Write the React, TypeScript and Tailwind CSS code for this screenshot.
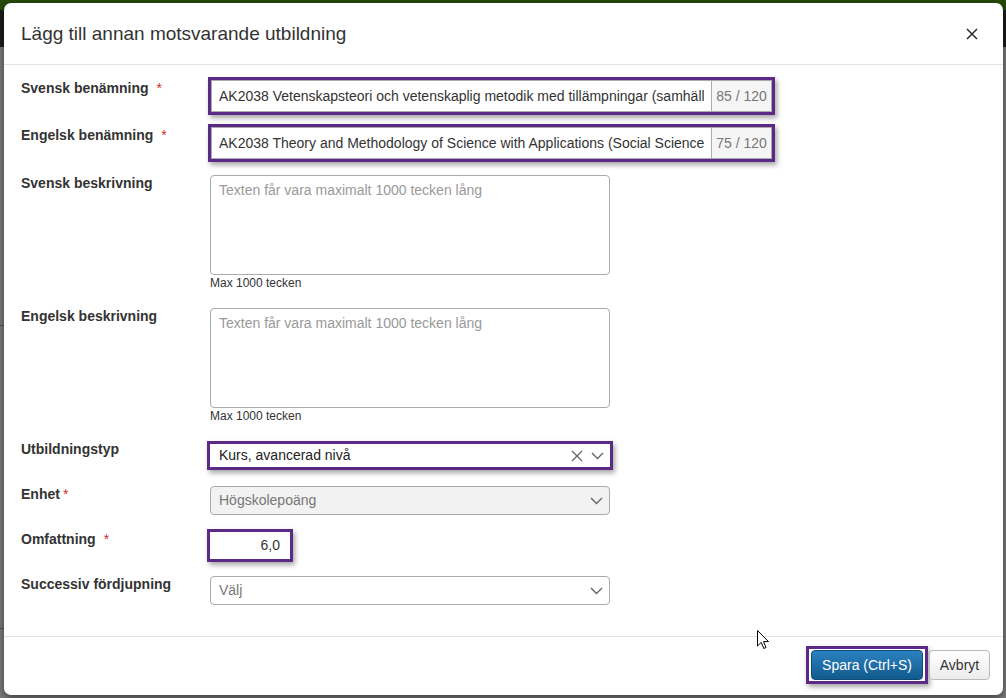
import React from "react";

const purple = "border-[3px] border-[#5b2a86] shadow-[2px_3px_5px_rgba(0,0,0,0.35)]";

function Chevron() {
  return (
    <svg width="13" height="8" viewBox="0 0 13 8" fill="none">
      <polyline points="1,1 6.5,6.5 12,1" stroke="#666" strokeWidth="1.4" />
    </svg>
  );
}

function Label({ text, star, gap = "ml-[8px]", className = "" }: { text: string; star?: boolean; gap?: string; className?: string }) {
  return (
    <div className={`w-[189px] shrink-0 text-[14px] font-bold leading-[16px] text-[#333] ${className}`}>
      {text}
      {star && <span className={`${gap} font-normal text-[#c9302c]`}>*</span>}
    </div>
  );
}

function CounterInput({ value, count }: { value: string; count: string }) {
  return (
    <div className={`-ml-[2px] flex h-[38px] w-[567px] bg-white ${purple}`}>
      <div className="flex min-w-0 flex-1 items-center border border-r-0 border-[#aaa] pl-[7px] text-[14px] text-[#333]">
        <span className="mr-[7px] block overflow-hidden whitespace-nowrap">{value}</span>
      </div>
      <div className="flex w-[61px] shrink-0 items-center justify-center border border-[#aaa] bg-[#f5f5f5] text-[14px] text-[#777]">
        {count}
      </div>
    </div>
  );
}

function TextBox() {
  return (
    <div className="flex flex-col">
      <textarea
        className="h-[100px] w-[400px] resize-none rounded-[4px] border border-[#aaa] bg-white px-[8px] pt-[5px] text-[14px] leading-[18px] text-[#333] placeholder:text-[#999] outline-none"
        placeholder="Texten får vara maximalt 1000 tecken lång"
      />
      <div className="mt-[1px] text-[12px] leading-[14px] text-[#333]">Max 1000 tecken</div>
    </div>
  );
}

function Select({ value, disabled }: { value: string; disabled?: boolean }) {
  return (
    <div
      className={`flex h-[29px] w-[400px] items-center justify-between rounded-[4px] border border-[#aaa] pl-[8px] pr-[6px] text-[14px] text-[#777] ${
        disabled ? "bg-[#f2f2f2]" : "bg-white"
      }`}
    >
      <span>{value}</span>
      <Chevron />
    </div>
  );
}

export default function App() {
  return (
    <div className="relative h-[698px] w-[1006px] overflow-hidden bg-[#7b7b7b] font-['Liberation_Sans',Arial,sans-serif]">
      <div className="h-[10px] bg-[#244a0b]" />
      <div className="h-[37px] bg-[#1c1c1c]" />
      <div className="mt-[278px] h-px w-[4px] bg-[#555]" />
      <div className="mt-[302px] h-px w-[4px] bg-[#555]" />

      <div className="absolute left-[4px] top-[3px] w-[999px] rounded-[7px] bg-white shadow-[0_3px_9px_rgba(0,0,0,0.5)]">
        <div className="flex h-[62px] items-center justify-between border-b border-[#e5e5e5] pl-[17px] pr-[25px]">
          <h1 className="text-[19px] leading-[22px] text-[#333]">Lägg till annan motsvarande utbildning</h1>
          <svg width="12" height="12" viewBox="0 0 12 12">
            <path d="M1 1 L11 11 M11 1 L1 11" stroke="#333" strokeWidth="1.6" />
          </svg>
        </div>

        <div className="flex flex-col pb-[31px] pl-[17px] pt-[12px]">
          <div className="flex">
            <Label text="Svensk benämning" star className="mt-[3px]" />
            <CounterInput
              value="AK2038 Vetenskapsteori och vetenskaplig metodik med tillämpningar (samhällsvetenskap)"
              count="85 / 120"
            />
          </div>
          <div className="mt-[9px] flex">
            <Label text="Engelsk benämning" star className="mt-[3px]" />
            <CounterInput
              value="AK2038 Theory and Methodology of Science with Applications (Social Sciences)"
              count="75 / 120"
            />
          </div>
          <div className="mt-[13px] flex">
            <Label text="Svensk beskrivning" />
            <TextBox />
          </div>
          <div className="mt-[18px] flex">
            <Label text="Engelsk beskrivning" />
            <TextBox />
          </div>
          <div className="mt-[18px] flex">
            <Label text="Utbildningstyp" />
            <div className={`-ml-[3px] flex h-[29px] w-[406px] items-center justify-between bg-white pl-[9px] pr-[6px] text-[14px] text-[#222] ${purple}`}>
              <span>Kurs, avancerad nivå</span>
              <div className="flex items-center gap-[8px]">
                <svg width="12" height="12" viewBox="0 0 12 12">
                  <path d="M1 1 L11 11 M11 1 L1 11" stroke="#666" strokeWidth="1.3" />
                </svg>
                <Chevron />
              </div>
            </div>
          </div>
          <div className="mt-[16px] flex">
            <Label text="Enhet" star gap="ml-[3px]" />
            <Select value="Högskolepoäng" disabled />
          </div>
          <div className="mt-[14px] flex">
            <Label text="Omfattning" star className="mt-[2px]" />
            <div className={`-ml-[3px] flex h-[33px] w-[86px] items-center justify-end bg-white pr-[10px] text-[14px] text-[#333] ${purple}`}>
              6,0
            </div>
          </div>
          <div className="mt-[14px] flex">
            <Label text="Successiv fördjupning" />
            <Select value="Välj" />
          </div>
        </div>

        <div className="flex justify-end border-t border-[#e5e5e5] pb-[11px] pr-[13px] pt-[9px]">
          <div className={`px-[2px] py-[1px] ${purple}`}>
            <button className="h-[30px] w-[112px] rounded-[4px] border border-[#0d4c78] bg-gradient-to-b from-[#2b82c0] to-[#115a8d] text-[14px] text-white">
              Spara (Ctrl+S)
            </button>
          </div>
          <button className="ml-[1px] mt-[4px] h-[30px] w-[61px] rounded-[4px] border border-[#bbb] bg-gradient-to-b from-white to-[#ececec] text-[14px] text-[#333]">
            Avbryt
          </button>
        </div>
      </div>

      <svg className="absolute left-[757px] top-[630px]" width="13" height="20" viewBox="0 0 13 20">
        <path d="M0.5 0.5 L0.5 16 L4.2 12.4 L6.8 18.5 L9 17.5 L6.5 11.6 L11.5 11.6 Z" fill="white" stroke="black" strokeWidth="1" />
      </svg>
    </div>
  );
}
